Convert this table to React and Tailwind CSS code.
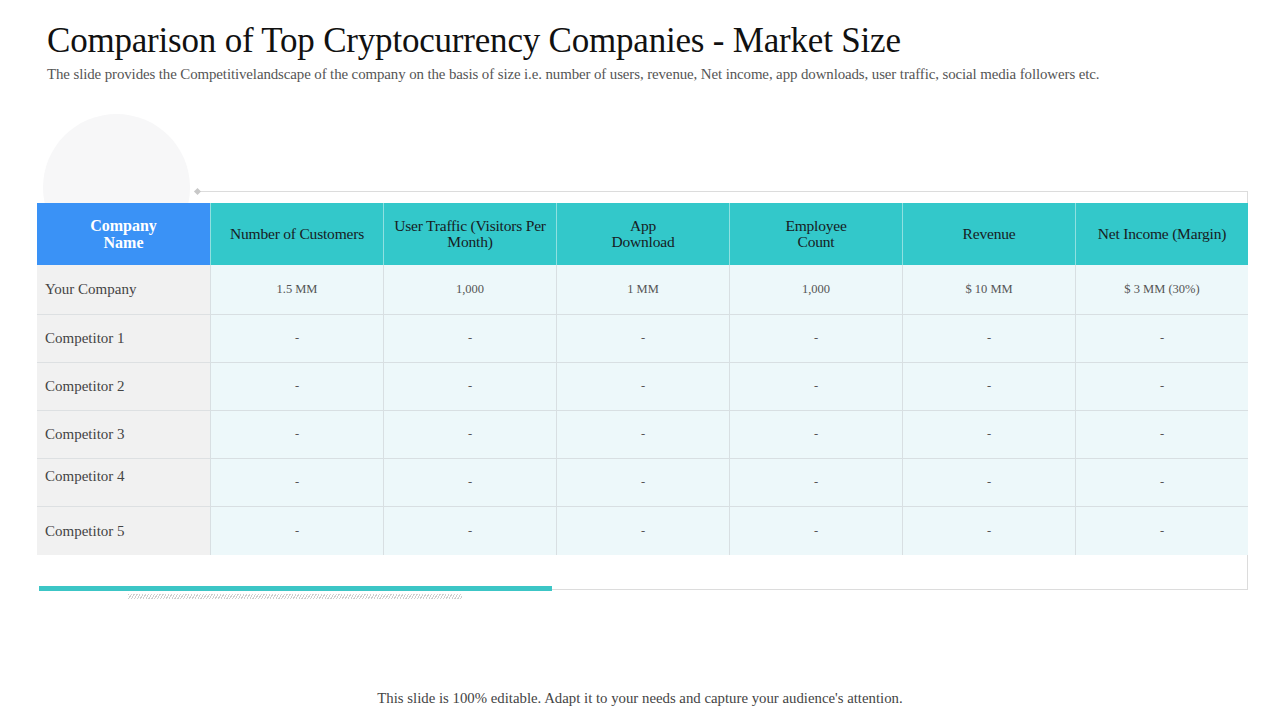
import React from 'react';

const columns = [
    'Number of Customers',
    'User Traffic (Visitors Per Month)',
    'App\nDownload',
    'Employee\nCount',
    'Revenue',
    'Net Income (Margin)',
];

const rows = [
    { name: 'Your Company', values: ['1.5 MM', '1,000', '1 MM', '1,000', '$ 10 MM', '$ 3 MM (30%)'], tall: true },
    { name: 'Competitor 1', values: ['-', '-', '-', '-', '-', '-'] },
    { name: 'Competitor 2', values: ['-', '-', '-', '-', '-', '-'] },
    { name: 'Competitor 3', values: ['-', '-', '-', '-', '-', '-'] },
    { name: 'Competitor 4', values: ['-', '-', '-', '-', '-', '-'], top: true },
    { name: 'Competitor 5', values: ['-', '-', '-', '-', '-', '-'], tall: true },
];

const App = () => {
    return (
        <div className="w-[1280px] h-[720px] bg-white overflow-hidden font-['Liberation_Serif',serif] flex flex-col">
            {/* Title */}
            <div className="pl-[47px] pt-[21px]">
                <h1 className="text-[35px] leading-[40px] text-[#111] tracking-[-0.2px]">
                    Comparison of Top Cryptocurrency Companies - Market Size
                </h1>
                <p className="text-[14.9px] leading-[16px] text-[#555] mt-[5px] tracking-[-0.1px]">
                    The slide provides the Competitivelandscape of the company on the basis of size i.e. number of users, revenue, Net income, app downloads, user traffic, social media followers etc.
                </p>
            </div>

            {/* Table area */}
            <div className="relative ml-[37px] w-[1211px] mt-[32px] pt-[89px]">
                {/* decorative circle */}
                <div className="absolute left-[6px] top-0 w-[147px] h-[147px] rounded-full bg-[#f7f7f8]" />
                {/* frame */}
                <div className="absolute left-[160px] top-[77px] right-0 h-[399px] border-t border-r border-b border-[#dcdcdc]" />
                <div className="absolute left-[158px] top-[75px] w-[5px] h-[5px] rotate-45 bg-[#c8c8c8]" />

                <div className="relative grid grid-cols-[repeat(7,173px)]">
                    <div className="h-[62px] bg-[#3a92f6] flex items-center justify-center text-center text-white font-bold text-[16px] leading-[17px]">
                        Company<br />Name
                    </div>
                    {columns.map((col) => (
                        <div
                            key={col}
                            className="h-[62px] bg-[#33c8ca] border-l border-[#8fe0e0] flex items-center justify-center text-center px-2 text-[#17201f] text-[15.5px] leading-[16px] whitespace-pre-line tracking-[-0.2px]"
                        >
                            {col}
                        </div>
                    ))}

                    {rows.map((row, i) => (
                        <React.Fragment key={row.name}>
                            <div
                                className={`${row.tall ? 'h-[49px]' : 'h-[48px]'} bg-[#f1f1f1] border-[#dde0e2] px-[8px] flex text-[15px] text-[#444] ${
                                    i > 0 ? 'border-t' : ''
                                } ${row.top ? 'items-start pt-[6px]' : 'items-center'}`}
                            >
                                {row.name}
                            </div>
                            {row.values.map((v, j) => (
                                <div
                                    key={j}
                                    className={`${row.tall ? 'h-[49px]' : 'h-[48px]'} bg-[#edf8fa] border-l border-[#d8dfe2] flex items-center justify-center text-[12.5px] text-[#555] ${
                                        i > 0 ? 'border-t' : ''
                                    }`}
                                >
                                    {v}
                                </div>
                            ))}
                        </React.Fragment>
                    ))}
                </div>

                <div className="relative mt-[31px] ml-[2px] w-[513px] h-[5px] bg-[#3cc6c6]" />
                <div className="relative mt-[3px] ml-[91px] w-[334px] h-[5px] bg-[repeating-linear-gradient(120deg,#cfcfcf_0px,#cfcfcf_1px,transparent_1px,transparent_2.5px)]" />
            </div>

            {/* Footer */}
            <p className="mt-auto mb-[13px] text-center text-[14.8px] leading-[18px] text-[#444]">
                This slide is 100% editable. Adapt it to your needs and capture your audience's attention.
            </p>
        </div>
    );
};

export default App;
